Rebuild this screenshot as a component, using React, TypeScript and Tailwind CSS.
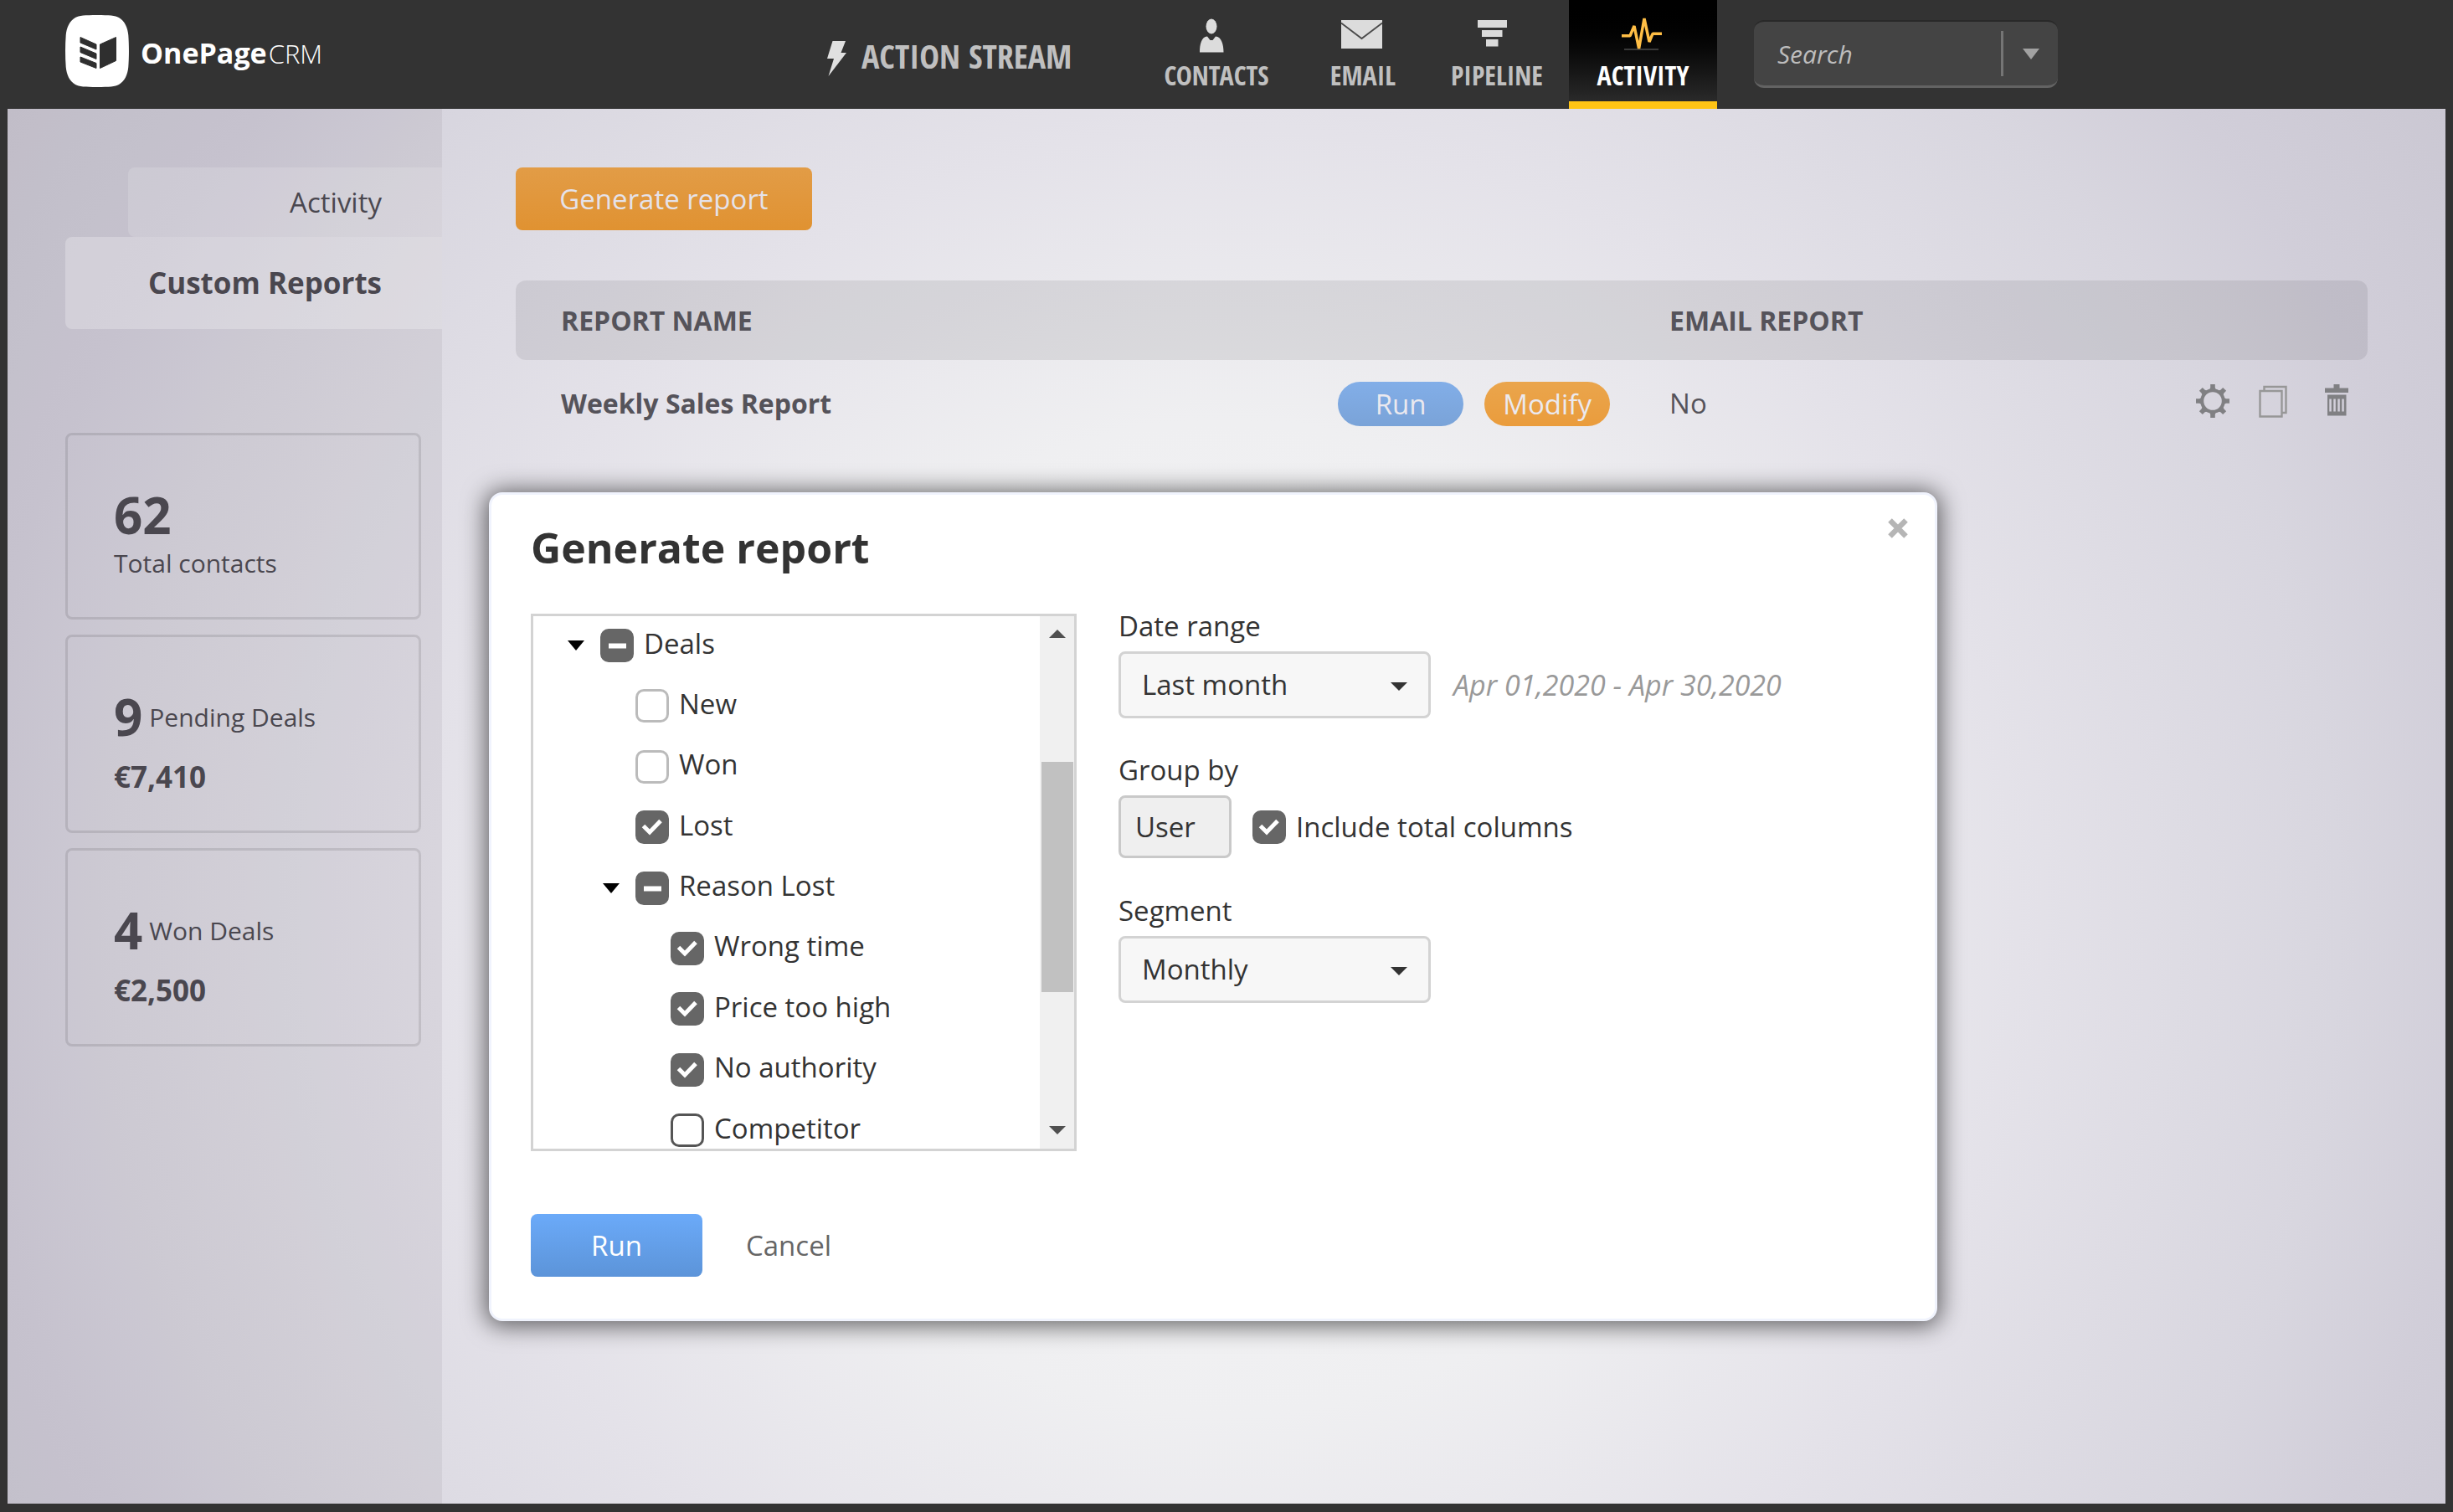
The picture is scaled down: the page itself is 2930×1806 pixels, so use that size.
import { useState } from 'react'
import type { ReactNode } from 'react'

type CheckState = 'on' | 'off' | 'mixed'

type TreeItem = {
  id: string
  label: string
  level: 0 | 1 | 2
  state: CheckState
  open?: boolean
  focused?: boolean
}

const TREE: TreeItem[] = [
  { id: 'deals', label: 'Deals', level: 0, state: 'mixed', open: true },
  { id: 'new', label: 'New', level: 1, state: 'off' },
  { id: 'won', label: 'Won', level: 1, state: 'off' },
  { id: 'lost', label: 'Lost', level: 1, state: 'on' },
  { id: 'reason-lost', label: 'Reason Lost', level: 1, state: 'mixed', open: true },
  { id: 'wrong-time', label: 'Wrong time', level: 2, state: 'on' },
  { id: 'price', label: 'Price too high', level: 2, state: 'on' },
  { id: 'authority', label: 'No authority', level: 2, state: 'on' },
  { id: 'competitor', label: 'Competitor', level: 2, state: 'off', focused: true },
]

const INDENT = ['pl-[41px]', 'pl-[83px]', 'pl-[125px]']

function Logo() {
  return (
    <a href="#" className="flex w-[988px] shrink-0 items-center pb-2 pl-[78px] text-white" aria-label="OnePage CRM">
      <svg className="h-[86px] w-[76px] shrink-0" viewBox="0 0 76 86">
        <path
          d="M38 0 C52 0 60 .6 64 3 C71 7 74.500 15 75.300 24 C76.200 36 76.200 50 75.300 62 C74.500 71 71 79 64 83 C60 85.400 52 86 38 86 C24 86 16 85.400 12 83 C5 79 1.500 71 .7 62 C-.2 50 -.2 36 .7 24 C1.500 15 5 7 12 3 C16 .6 24 0 38 0Z"
          fill="#fff"
        />
        <g fill="#2f2f2f" stroke="#2f2f2f" strokeWidth="1" strokeLinejoin="round">
          <path d="M18 26.500 L37 35 V41 L18 33Z" />
          <path d="M18 38 L37 46 V52.500 L18 44.500Z" />
          <path d="M18 50 L37 57.500 V63.500 L18 56Z" />
          <path d="M41.500 35 L60.500 26.500 V54.500 L41.500 63.500Z" />
        </g>
      </svg>
      <span className="flex items-baseline gap-[2px] pl-[14px] pt-1 leading-none">
        <span className="text-[34px] font-bold">OnePage</span>
        <span className="text-[31px] font-light">CRM</span>
      </span>
    </a>
  )
}

function NavLink({ label, width, active, children }: { label: string; width: string; active?: boolean; children: ReactNode }) {
  return (
    <a
      href="#"
      className={`flex h-full shrink-0 flex-col items-center pt-5 font-['Open_Sans_Condensed','Open_Sans',sans-serif] ${width} ${
        active
          ? 'border-b-[9px] border-[#ffc415] bg-linear-to-b from-black to-[#2a2a2a] font-semibold text-white'
          : 'font-medium text-[#c0c0c0]'
      }`}
    >
      <svg className="h-[46px] w-[60px] shrink-0" viewBox="0 0 60 46">
        {children}
      </svg>
      <span className="text-[32px] leading-[48px]">{label}</span>
    </a>
  )
}

function Header() {
  return (
    <header className="flex h-[130px] shrink-0">
      <Logo />
      <a
        href="#"
        className="flex w-[375px] shrink-0 items-center gap-[17px] font-['Open_Sans_Condensed','Open_Sans',sans-serif] text-[40px] font-semibold leading-none text-[#c0c0c0]"
      >
        <svg className="mt-[10px] h-[42px] w-[24px]" viewBox="0 0 24 42" fill="#e0e0e0">
          <path d="M6.500 0H22L16.500 14H23L1.500 42L8 21H0Z" />
        </svg>
        <span className="pt-1">ACTION STREAM</span>
      </a>
      <nav className="flex h-full shrink-0">
        <NavLink label="CONTACTS" width="w-[180px]">
          <g fill="#dcdcdc">
            <ellipse cx="24" cy="11.500" rx="6.500" ry="9" />
            <path d="M10 42.500C10 33 12 24 19 23.500L22.500 28H25.500L29 23.500C36 24 38.500 33 38.500 42.500Z" />
          </g>
        </NavLink>
        <NavLink label="EMAIL" width="w-[170px]">
          <path d="M4 4H53V38H4Z" fill="#dcdcdc" />
          <path d="M4 7.500L28.500 26L53 7.500" fill="none" stroke="#4a4a4a" strokeWidth="1.800" />
        </NavLink>
        <NavLink label="PIPELINE" width="w-[150px]">
          <g fill="#dadada">
            <path d="M7 4H42V13H7Z" />
            <path d="M12 16H36.500V24H12Z" />
            <path d="M17 27H31.500V35.500H17Z" />
          </g>
        </NavLink>
        <div className="w-[11px]" />
        <NavLink label="ACTIVITY" width="w-[177px]" active>
          <path d="M7 39H48" stroke="#3a3a3a" strokeWidth="2" />
          <path d="M4 22.700H14L19 11L24.600 38L31 2L37 30L41 20.300H52" fill="none" stroke="#ffbe45" strokeWidth="3.500" strokeLinejoin="bevel" />
        </NavLink>
      </nav>
      <form className="ml-11 mt-6 flex h-[81px] w-[363px] items-center rounded-xl border-b-[3px] border-t-2 border-b-[#636363] border-t-[#292929] bg-[#444]">
        <input
          type="text"
          aria-label="Search"
          placeholder="Search"
          className="h-full min-w-0 flex-1 bg-transparent pl-7 text-[30px] italic text-white outline-none placeholder:text-[#bdbdbd]"
        />
        <button type="button" aria-label="Search options" className="flex h-[54px] w-[68px] items-center justify-center border-l-[3px] border-[#757575]">
          <svg className="h-[13px] w-5" viewBox="0 0 20 13" fill="#a2a2a2">
            <path d="M0 0H20L10 13Z" />
          </svg>
        </button>
      </form>
    </header>
  )
}

function Sidebar() {
  return (
    <aside className="w-[519px] shrink-0 bg-[#1a1020]/6 pt-[70px] text-[#4a474f]">
      <nav className="flex flex-col items-end">
        <a href="#" className="flex h-[83px] w-[375px] items-center justify-end rounded-l-lg bg-white/15 pr-[72px] text-[33px]">
          Activity
        </a>
        <a href="#" className="flex h-[110px] w-[450px] items-center justify-end rounded-l-lg bg-white/25 pr-[72px] text-[35px] font-bold">
          Custom Reports
        </a>
      </nav>
      <div className="ml-[69px] mr-[25px] mt-[124px] space-y-[18px]">
        <section className="rounded-lg border-[3px] border-black/10 px-[55px] pb-9 pt-[65px]">
          <p className="text-[60px] font-bold leading-[60px]">62</p>
          <p className="text-[30px] leading-[56px]">Total contacts</p>
        </section>
        <DealCard count={9} label="Pending Deals" amount="€7,410" />
        <DealCard count={4} label="Won Deals" amount="€2,500" />
      </div>
    </aside>
  )
}

function DealCard({ count, label, amount }: { count: number; label: string; amount: string }) {
  return (
    <section className="rounded-lg border-[3px] border-black/10 px-[55px] pb-9 pt-[65px]">
      <p className="flex items-center gap-2">
        <span className="text-[60px] font-bold leading-[60px]">{count}</span>
        <span className="text-[30px]">{label}</span>
      </p>
      <p className="mt-[14px] text-[35px] font-bold leading-[56px]">{amount}</p>
    </section>
  )
}

function ReportTable() {
  return (
    <table className="mt-[60px] w-full table-fixed border-separate border-spacing-0 text-left text-[32px] text-[#55535a]">
      <colgroup>
        <col className="w-[44.400%]" />
        <col className="w-[17.900%]" />
        <col />
        <col />
      </colgroup>
      <thead>
        <tr className="h-[95px]">
          <th colSpan={2} className="rounded-l-xl bg-black/8 pl-[54px] font-bold">REPORT NAME</th>
          <th className="bg-black/8 font-bold">EMAIL REPORT</th>
          <th className="rounded-r-xl bg-black/8" aria-label="Options" />
        </tr>
      </thead>
      <tbody>
        <tr className="h-[104px]">
          <td className="pl-[54px] font-bold">Weekly Sales Report</td>
          <td>
            <div className="flex gap-[25px] text-[33px] text-[#ebe9ef]">
              <button type="button" className="h-[53px] w-[150px] rounded-full bg-linear-to-b from-[#82aee8] to-[#7aa3d8] leading-none">Run</button>
              <button type="button" className="h-[53px] w-[150px] rounded-full bg-linear-to-b from-[#eaa54c] to-[#ea9c3c] leading-none">Modify</button>
            </div>
          </td>
          <td className="text-[33px]">No</td>
          <td>
            <div className="flex justify-end gap-[34px] pb-[6px] pr-[17px]">
              <button type="button" aria-label="Settings"><GearIcon /></button>
              <button type="button" aria-label="Duplicate">
                <svg className="size-10" viewBox="0 0 40 40" fill="none" stroke="#979797" strokeWidth="2.400">
                  <path d="M7.500 7V3H33.500V34H29" />
                  <path d="M2.500 8H28.500V38.500H2.500Z" />
                </svg>
              </button>
              <button type="button" aria-label="Delete">
                <svg className="size-10" viewBox="0 0 40 40" fill="#808083">
                  <path d="M16.500 0H23.500V4.500H34V10H6V4.500H16.500Z" />
                  <path fillRule="evenodd" d="M9 12.500H31.500V37.500H9ZM11.300 17.500V32.500H13.800V17.500ZM16.300 17.500V32.500H18.800V17.500ZM21.300 17.500V32.500H23.800V17.500ZM26.300 17.500V32.500H28.800V17.500Z" />
                </svg>
              </button>
            </div>
          </td>
        </tr>
      </tbody>
    </table>
  )
}

function GearIcon() {
  return (
    <svg className="size-10" viewBox="0 0 40 40" fill="#808083">
      <circle cx="20" cy="20" r="12.800" fill="none" stroke="#808083" strokeWidth="4" />
      {[0, 45, 90, 135, 180, 225, 270, 315].map((angle) => (
        <path key={angle} d="M15.500 8L17.200 4V0H22.800V4L24.500 8Z" transform={`rotate(${angle} 20 20)`} />
      ))}
    </svg>
  )
}

function Checkbox({ id, initial, focused }: { id: string; initial: CheckState; focused?: boolean }) {
  const [state, setState] = useState<CheckState>(initial)
  return (
    <span className="relative size-10 shrink-0">
      <input
        id={id}
        type="checkbox"
        checked={state === 'on'}
        ref={(el) => {
          if (el) el.indeterminate = state === 'mixed'
        }}
        onChange={() => setState(state === 'on' ? 'off' : 'on')}
        className={`block size-10 appearance-none rounded-[10px] border-[3px] ${
          state !== 'off' ? 'border-[#666] bg-[#666]' : focused ? 'border-[#555] bg-white' : 'border-[#bbb] bg-white'
        }`}
      />
      <svg className="pointer-events-none absolute inset-0 size-10" viewBox="0 0 40 40" fill="none" stroke="#fff">
        {state === 'on' && <path d="M9.500 18.500L17 26L30 12.500" strokeWidth="5" />}
        {state === 'mixed' && <path d="M10 20.500H31" strokeWidth="6" />}
      </svg>
    </span>
  )
}

function Tree() {
  return (
    <div className="flex h-[642px] w-[652px] shrink-0 border-[3px] border-[#d3d3d3]">
      <ul className="flex flex-1 flex-col justify-between overflow-hidden pb-[2px] pt-[15px]">
        {TREE.map((item) => (
          <li key={item.id} className={`flex h-10 items-center ${INDENT[item.level]}`}>
            <span className="w-[39px] shrink-0">
              {item.open && (
                <button type="button" aria-label={`Collapse ${item.label}`} className="block">
                  <svg className="h-3 w-5" viewBox="0 0 20 12">
                    <path d="M0 0H20L10 12Z" />
                  </svg>
                </button>
              )}
            </span>
            <Checkbox id={item.id} initial={item.state} focused={item.focused} />
            <label htmlFor={item.id} className="pb-[5px] pl-3 leading-[40px]">
              {item.label}
            </label>
          </li>
        ))}
      </ul>
      <div className="flex w-[41px] flex-col items-center bg-[#f0f0f0] pb-[17px] pt-[16px]">
        <button type="button" aria-label="Scroll up">
          <svg className="block h-[10px] w-5" viewBox="0 0 20 10" fill="#505050">
            <path d="M0 10H20L10 0Z" />
          </svg>
        </button>
        <div className="mt-[148px] h-[275px] w-[38px] bg-[#c1c1c1]" />
        <button type="button" aria-label="Scroll down" className="mt-auto">
          <svg className="block h-[10px] w-5" viewBox="0 0 20 10" fill="#505050">
            <path d="M0 0H20L10 10Z" />
          </svg>
        </button>
      </div>
    </div>
  )
}

function SelectBox({ id, value }: { id: string; value: string }) {
  return (
    <div className="relative h-20 w-[373px]">
      <select id={id} className="size-full appearance-none rounded-lg border-[3px] border-[#d3d3d3] bg-[#f7f7f7] pl-[25px]">
        <option>{value}</option>
      </select>
      <svg className="pointer-events-none absolute right-[28px] top-[37px] h-[10px] w-5" viewBox="0 0 20 10" fill="#333">
        <path d="M0 0H20L10 10Z" />
      </svg>
    </div>
  )
}

function GenerateReportDialog() {
  return (
    <div
      role="dialog"
      aria-labelledby="dialog-title"
      className="absolute left-[575px] top-[458px] w-[1730px] rounded-2xl border-[3px] border-[#f0f3fd] bg-white px-[47px] pb-[50px] pt-[33px] text-[33px] text-[#333] shadow-[0_2px_28px_4px_rgba(0,0,0,0.58)]"
    >
      <h2 id="dialog-title" className="text-[50px] font-bold leading-[60px]">Generate report</h2>
      <button type="button" aria-label="Close" className="absolute right-[32px] top-[28px]">
        <svg className="size-6" viewBox="0 0 24 24" stroke="#b5b5b5" strokeWidth="6.500">
          <path d="M2.500 2.500L21.500 21.500M21.500 2.500L2.500 21.500" />
        </svg>
      </button>

      <div className="mt-[49px] flex gap-[50px]">
        <Tree />
        <div className="flex flex-col items-start">
          <label htmlFor="date-range" className="leading-[30px]">Date range</label>
          <div className="mt-[15px] flex items-center gap-[27px]">
            <SelectBox id="date-range" value="Last month" />
            <span className="text-[34px] italic text-[#999]">Apr 01,2020 - Apr 30,2020</span>
          </div>

          <label htmlFor="group-by" className="mt-[47px] leading-[30px]">Group by</label>
          <div className="mt-[15px] flex items-center">
            <button id="group-by" type="button" className="h-[75px] w-[135px] rounded-lg border-[3px] border-[#c9c9c9] bg-[#efefef] pl-[17px] text-left">
              User
            </button>
            <span className="w-[25px]" />
            <Checkbox id="totals" initial="on" />
            <label htmlFor="totals" className="pl-3">Include total columns</label>
          </div>

          <label htmlFor="segment" className="mb-[15px] mt-12 leading-[30px]">Segment</label>
          <SelectBox id="segment" value="Monthly" />
        </div>
      </div>

      <div className="mt-[75px] flex items-center">
        <button type="button" className="h-[75px] w-[205px] rounded-lg bg-linear-to-b from-[#6baaf9] to-[#5c94d9] text-white">Run</button>
        <button type="button" className="pl-[52px] text-[#666]">Cancel</button>
      </div>
    </div>
  )
}

export default function App() {
  return (
    <div className="flex min-h-screen flex-col bg-[#333] font-['Open_Sans',sans-serif]">
      <Header />
      <div className="relative mx-[9px] mb-[10px] flex flex-1 bg-[radial-gradient(circle_at_50%_58%,#f6f6f7_0%,#efeff1_34%,#e4e2e9_54%,#d8d6df_76%,#d1ced9_86%,#cbc8d3_100%)]">
        <Sidebar />
        <main className="flex-1 pl-[88px] pr-[93px] pt-[70px]">
          <button type="button" className="h-[75px] w-[354px] rounded-lg bg-linear-to-b from-[#e29c46] to-[#e09231] text-[33px] text-[#e5e2e9]">
            Generate report
          </button>
          <ReportTable />
        </main>
        <GenerateReportDialog />
      </div>
    </div>
  )
}
